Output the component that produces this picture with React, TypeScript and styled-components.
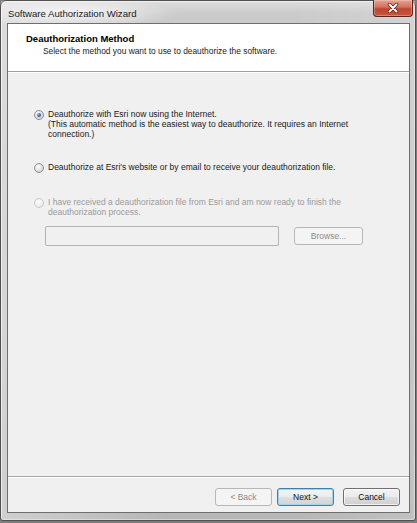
import React from "react";
import styled, { createGlobalStyle, css } from "styled-components";

const Global = createGlobalStyle`
  html, body { margin: 0; padding: 0; }
  body {
    width: 417px;
    height: 523px;
    overflow: hidden;
    background: #7d7d7d;
    font-family: "Liberation Sans", Arial, sans-serif;
  }
`;

const Page = styled.div`
  display: flex;
  width: 417px;
  height: 523px;
`;

const Window = styled.div`
  width: 414px;
  height: 519px;
  display: flex;
  flex-direction: column;
  border: 1px solid #505050;
  border-radius: 7px 7px 3px 3px;
  background:
    linear-gradient(to right, rgba(255,255,255,0.35), rgba(255,255,255,0) 40%, rgba(255,255,255,0) 70%, rgba(255,255,255,0.15)),
    linear-gradient(to bottom, #cbcbcb, #c0c0c0 60%, #b6b6b6);
  box-shadow: inset 1px 1px 0 rgba(255,255,255,0.6), inset -1px -1px 0 rgba(255,255,255,0.4);
`;

const TitleBar = styled.div`
  height: 22px;
  display: flex;
  align-items: flex-start;
  padding: 0 2px 0 7px;
  background:
    radial-gradient(ellipse 110px 14px at 70px 12px, rgba(255,255,255,0.75), rgba(255,255,255,0) 100%),
    linear-gradient(to bottom, rgba(255,255,255,0.35), rgba(255,255,255,0) 60%);
`;

const TitleText = styled.span`
  align-self: center;
  font-size: 9.6px;
  color: #1a1a1a;
  margin-top: 3px;
`;

const CloseButton = styled.div`
  margin-left: auto;
  width: 38px;
  height: 16px;
  margin-top: -1px;
  display: flex;
  align-items: center;
  justify-content: center;
  border: 1px solid #5e2418;
  border-top: none;
  border-radius: 0 0 4px 4px;
  background: linear-gradient(to bottom, #e3a293 0%, #d2705e 45%, #c0452f 55%, #c8553c 100%);
  box-shadow: inset 0 0 0 1px rgba(255,220,200,0.35);
`;

const Client = styled.div`
  flex: 1;
  margin: 0 5px 7px 6px;
  display: flex;
  flex-direction: column;
  border: 1px solid #6e6e6e;
  background: #f0f0f0;
  font-size: 8.5px;
  line-height: 10px;
  color: #1a1a1a;
`;

const Header = styled.div`
  height: 48px;
  flex: none;
  background: #ffffff;
  border-bottom: 1px solid #a0a0a0;
  box-shadow: 0 1px 0 #ffffff;
  padding: 9px 0 0 18px;
  box-sizing: border-box;
`;

const HeaderTitle = styled.div`
  font-weight: bold;
  font-size: 9.5px;
  line-height: 11px;
  color: #000;
`;

const HeaderSub = styled.div`
  margin-top: 2px;
  padding-left: 17px;
  font-size: 8.4px;
  line-height: 11px;
  color: #222;
`;

const Body = styled.div`
  flex: 1;
  padding: 37px 0 0 26px;
  display: flex;
  flex-direction: column;
`;

const Option = styled.div<{ $gap: number }>`
  display: flex;
  align-items: flex-start;
  margin-top: ${(p) => p.$gap}px;
`;

const Radio = styled.span<{ $checked?: boolean; $disabled?: boolean }>`
  flex: none;
  width: 8px;
  height: 8px;
  margin: 1px 4px 0 0;
  border-radius: 50%;
  border: 1px solid #8e8f8f;
  background: radial-gradient(circle at 40% 35%, #ffffff, #d6d6d6 70%, #c4c4c4);
  display: flex;
  align-items: center;
  justify-content: center;
  ${(p) =>
    p.$disabled &&
    css`
      border-color: #c8c8c8;
      background: radial-gradient(circle at 40% 35%, #fbfbfb, #ececec 70%, #e4e4e4);
    `}
  &::after {
    content: "";
    display: ${(p) => (p.$checked ? "block" : "none")};
    width: 4px;
    height: 4px;
    border-radius: 50%;
    background: radial-gradient(circle at 35% 35%, #8fb5ea, #1f4fa3 70%);
  }
`;

const OptionText = styled.div<{ $disabled?: boolean }>`
  color: ${(p) => (p.$disabled ? "#9a9a9a" : "#1a1a1a")};
  width: 318px;
`;

const FileRow = styled.div`
  display: flex;
  align-items: center;
  margin-top: 9px;
  padding-left: 11px;
`;

const FileBox = styled.div`
  width: 232px;
  height: 18px;
  border: 1px solid #b4b4b4;
  border-radius: 2px;
  background: #f0f0f0;
`;

const Footer = styled.div`
  flex: none;
  height: 36px;
  border-top: 1px solid #a8a8a8;
  box-shadow: inset 0 1px 0 #ffffff;
  display: flex;
  justify-content: flex-end;
  align-items: flex-start;
  gap: 5px;
  padding: 11px 9px 0 0;
  box-sizing: border-box;
`;

const Button = styled.button<{ $variant?: "default" | "disabled" | "normal"; $w?: number; $ml?: number }>`
  width: ${(p) => p.$w ?? 57}px;
  height: 18px;
  margin-left: ${(p) => p.$ml ?? 0}px;
  padding: 0;
  font-family: "Liberation Sans", Arial, sans-serif;
  font-size: 8.5px;
  color: #111;
  border: 1px solid #707070;
  border-radius: 3px;
  background: linear-gradient(to bottom, #f3f3f3 0%, #ebebeb 50%, #dddddd 51%, #cfcfcf 100%);
  box-shadow: inset 0 0 0 1px rgba(255,255,255,0.7);
  ${(p) =>
    p.$variant === "disabled" &&
    css`
      color: #8a8a8a;
      border-color: #b5b8ba;
      background: #f4f4f4;
      box-shadow: none;
    `}
  ${(p) =>
    p.$variant === "default" &&
    css`
      border-color: #3c7fb1;
      background: linear-gradient(to bottom, #f4f4f4 0%, #ececec 50%, #dfdfdf 51%, #d3d3d3 100%);
      box-shadow: inset 0 0 0 1px #9ed5f0;
    `}
`;

export default function App() {
  return (
    <>
      <Global />
      <Page>
        <Window>
          <TitleBar>
            <TitleText>Software Authorization Wizard</TitleText>
            <CloseButton>
              <svg width="12" height="10" viewBox="0 0 12 10">
                <path d="M2.5 1.5 L9.5 8.5 M9.5 1.5 L2.5 8.5" stroke="#5a1a10" strokeWidth="3.4" strokeLinecap="round" />
                <path d="M2.5 1.5 L9.5 8.5 M9.5 1.5 L2.5 8.5" stroke="#ffffff" strokeWidth="2" strokeLinecap="round" />
              </svg>
            </CloseButton>
          </TitleBar>
          <Client>
            <Header>
              <HeaderTitle>Deauthorization Method</HeaderTitle>
              <HeaderSub>Select the method you want to use to deauthorize the software.</HeaderSub>
            </Header>
            <Body>
              <Option $gap={0}>
                <Radio $checked />
                <OptionText>
                  Deauthorize with Esri now using the Internet.
                  <br />
                  (This automatic method is the easiest way to deauthorize. It requires an Internet connection.)
                </OptionText>
              </Option>
              <Option $gap={23}>
                <Radio />
                <OptionText>Deauthorize at Esri's website or by email to receive your deauthorization file.</OptionText>
              </Option>
              <Option $gap={24}>
                <Radio $disabled />
                <OptionText $disabled>
                  I have received a deauthorization file from Esri and am now ready to finish the deauthorization process.
                </OptionText>
              </Option>
              <FileRow>
                <FileBox />
                <Button $variant="disabled" $w={69} $ml={15}>Browse...</Button>
              </FileRow>
            </Body>
            <Footer>
              <Button $variant="disabled">&lt; Back</Button>
              <Button $variant="default">Next &gt;</Button>
              <Button $ml={4}>Cancel</Button>
            </Footer>
          </Client>
        </Window>
      </Page>
    </>
  );
}
